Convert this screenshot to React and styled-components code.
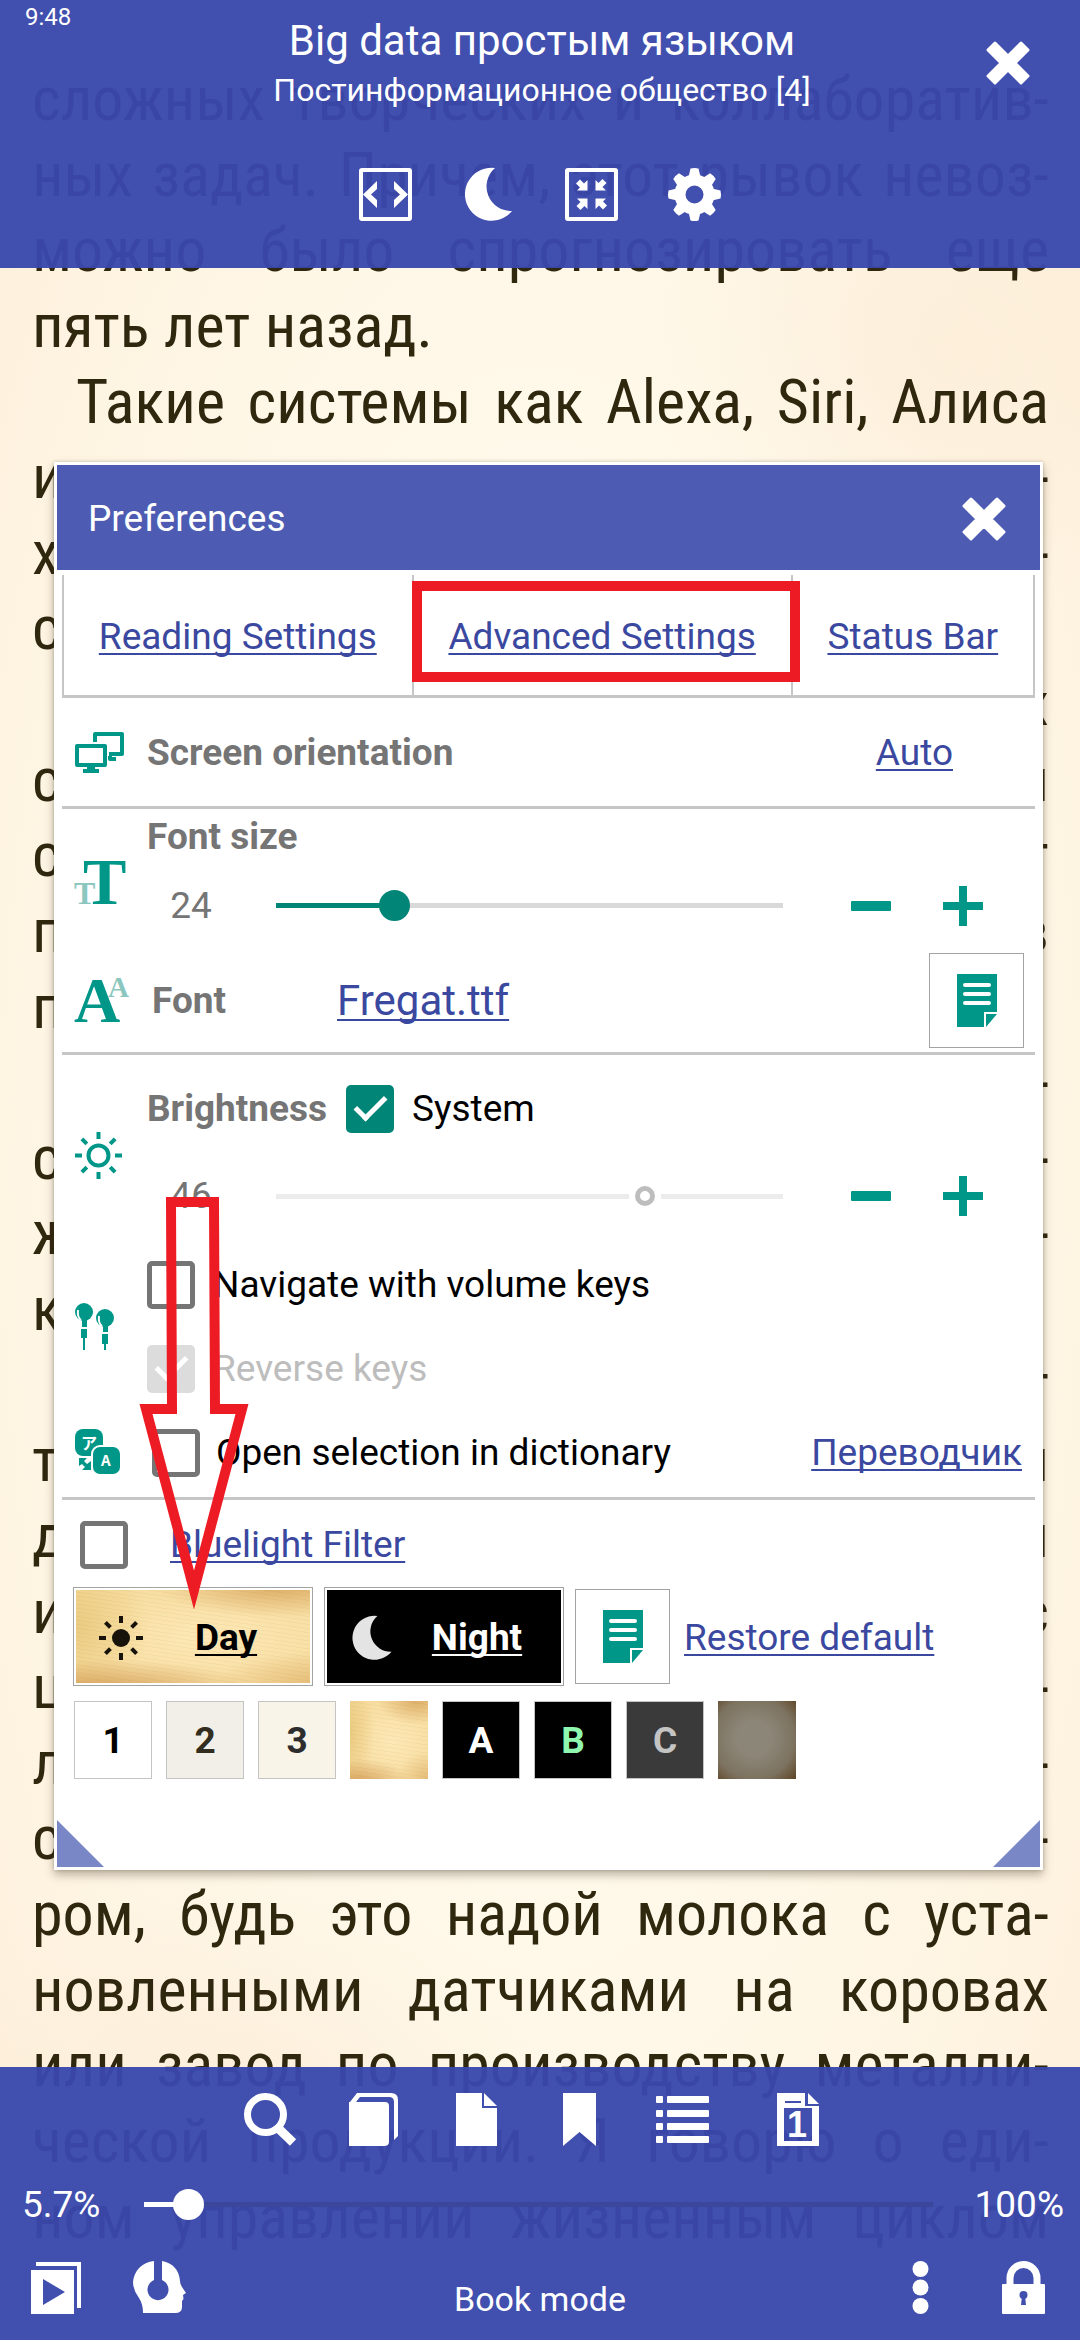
import React from 'react';
import styled, { createGlobalStyle, css } from 'styled-components';

const teal = '#009688';
const link = '#3a489f';
const grey = '#757575';
const rule = '#c6c6c6';
const red = '#ed1c24';
const ui = 'Roboto, "Liberation Sans", sans-serif';

const GlobalStyle = createGlobalStyle`
  *, *::before, *::after { box-sizing: border-box; }
  body { margin: 0; font-family: ${ui}; font-size: 37px; line-height: 44px; color: #000; }
  button { border: 0; padding: 0; background: none; font: inherit; color: inherit; cursor: pointer; }
  svg { display: block; flex: none; overflow: visible; }
`;

/* ---------- page ---------- */

const Reader = styled.main`
  position: relative;
  min-height: 100vh;
  overflow: hidden;
  background:
    radial-gradient(ellipse 300px 260px at 88% 15%, rgba(250, 230, 206, 0.4), transparent),
    radial-gradient(ellipse 320px 220px at 22% 90%, rgba(250, 228, 204, 0.4), transparent),
    radial-gradient(ellipse 70% 75% at 50% 50%, #fffaec 35%, #fef3e0 80%, #fdecd6 100%);
`;

const BookText = styled.article`
  padding: 61px 31px 0 32px;
  font-family: "Roboto Condensed", Roboto, "Liberation Sans", sans-serif;
  font-size: 62px;
  line-height: 1.22;
  color: #30270f;
`;

const Line = styled.p`
  margin: 0;
  min-height: 1.22em;
  white-space: nowrap;
  text-align: ${(p) => p.$align || 'justify'};
  text-align-last: ${(p) => p.$align || 'justify'};
  text-indent: ${(p) => (p.$indent ? '44px' : '0')};
`;

const lines = [
  { text: 'сложных творческих и коллаборатив-' },
  { text: 'ных задач. Причем, этот рывок невоз-' },
  { text: 'можно было спрогнозировать еще' },
  { text: 'пять лет назад.', align: 'left' },
  { text: 'Такие системы как Alexa, Siri, Алиса', indent: true },
  { text: 'и -' },
  { text: 'х -' },
  { text: 'с', align: 'left' },
  { text: 'х', align: 'right' },
  { text: 'с и' },
  { text: 'с т' },
  { text: 'п в' },
  { text: 'п', align: 'left' },
  { text: '-', align: 'right' },
  { text: 'с -' },
  { text: 'ж -' },
  { text: 'к', align: 'left' },
  { text: 'т', align: 'right' },
  { text: 'т и' },
  { text: 'д и' },
  { text: 'и с' },
  { text: 'ц -' },
  { text: 'л -' },
  { text: 'с -' },
  { text: 'ром, будь это надой молока с уста-' },
  { text: 'новленными датчиками на коровах' },
  { text: 'или завод по производству металли-' },
  { text: 'ческой продукции. Я говорю о еди-' },
  { text: 'ном управлении жизненным циклом' },
];

/* ---------- bars ---------- */

const bar = css`
  position: absolute;
  left: 0;
  right: 0;
  background: rgba(57, 72, 172, 0.96);
  color: #fff;
`;

const TopBar = styled.header`
  ${bar}
  top: 0;
  padding: 16px 0 47px;
`;

const Clock = styled.time`
  position: absolute;
  left: 25px;
  top: 5px;
  font-size: 24px;
  line-height: 24px;
`;

const TitleRow = styled.div`
  display: grid;
  grid-template-columns: 1fr auto 1fr;
  align-items: center;
  padding-right: 50px;
  padding-left: 54px;
`;

const Titles = styled.div`
  grid-column: 2;
  text-align: center;
`;

const Title = styled.h1`
  margin: 0 0 4px;
  font-size: 42px;
  line-height: 50px;
  font-weight: 400;
`;

const Subtitle = styled.p`
  margin: 0;
  font-size: 32px;
  line-height: 40px;
`;

const CloseButton = styled.button`
  justify-self: end;
`;

const IconBar = styled.nav`
  display: flex;
  justify-content: center;
  margin-top: ${(p) => p.$top || 0}px;
`;

const IconButton = styled.button`
  display: flex;
  align-items: center;
  justify-content: center;
  width: ${(p) => (p.$wide ? 128 : 103)}px;
  height: 53px;
`;

const BottomBar = styled.footer`
  ${bar}
  bottom: 0;
  padding: 26px 0;
`;

const Progress = styled.div`
  display: grid;
  grid-template-columns: 122px 1fr 131px;
  align-items: center;
  height: 115px;
  padding: 2px 16px 0 22px;
`;

const Percent = styled.span`
  text-align: ${(p) => (p.$end ? 'right' : 'left')};
`;

const ModeRow = styled.div`
  display: grid;
  grid-template-columns: 1fr auto 1fr;
  padding: 0 5px;
`;

const Group = styled.div`
  display: flex;
  justify-content: ${(p) => (p.$end ? 'flex-end' : 'flex-start')};
`;

const Mode = styled.span`
  align-self: end;
  font-size: 34px;
  line-height: 30px;
`;

/* ---------- dialog ---------- */

const Dialog = styled.section`
  position: absolute;
  left: 54px;
  right: 37px;
  top: 462px;
  padding: 3px;
  background: #fff;
  box-shadow: 0 5px 9px rgba(60, 50, 30, 0.35), 0 0 3px rgba(60, 50, 30, 0.25);
`;

const DialogHead = styled.header`
  display: flex;
  align-items: center;
  justify-content: space-between;
  height: 105px;
  padding: 2px 34px 0 31px;
  background: #4d5cb2;
  color: #fff;
`;

const DialogTitle = styled.h2`
  margin: 0;
  font-size: 37px;
  font-weight: 400;
`;

const Body = styled.div`
  padding: 5px 5px 0;
`;

const Tabs = styled.nav`
  display: flex;
  border: 2px solid ${rule};
  border-top: 0;
  border-bottom-width: 3px;
`;

const Tab = styled.div`
  position: relative;
  flex: 1 1 auto;
  display: flex;
  align-items: center;
  justify-content: center;
  height: 120px;
  padding-top: 3px;
  & + & { border-left: 2px solid ${rule}; }
`;

const Highlight = styled.span`
  position: absolute;
  z-index: 1;
  inset: 6px -9px 13px -2px;
  border: 10px solid ${red};
  pointer-events: none;
`;

const Link = styled.a`
  color: ${link};
  font-size: ${(p) => (p.$large ? 42 : 37)}px;
  text-decoration: underline;
  text-decoration-thickness: 2px;
  text-underline-offset: 4px;
  text-decoration-skip-ink: none;
`;

const Section = styled.section`
  border-bottom: 3px solid ${rule};
  padding: ${(p) => p.$pad || '0'};
`;

const Setting = styled.div`
  display: grid;
  grid-template-columns: 72px 1fr;
  align-items: center;
  padding-left: 13px;
`;

const Row = styled.div`
  display: flex;
  align-items: center;
  height: ${(p) => p.$h}px;
  padding-top: 2px;
  padding-right: ${(p) => p.$end || 0}px;
  padding-left: ${(p) => p.$start || 0}px;
`;

const Label = styled.label`
  color: ${grey};
  font-weight: 700;
  width: ${(p) => (p.$w ? `${p.$w}px` : 'auto')};
`;

const Push = styled.span`
  margin-left: auto;
`;

const Value = styled.output`
  width: 88px;
  margin-right: 41px;
  text-align: center;
  color: ${grey};
`;

const track = css`
  height: 5px;
  background: ${(p) =>
    p.$ghost
      ? p.$rest
      : `linear-gradient(to right, ${p.$fill} ${p.$at}%, ${p.$rest} ${p.$at}%)`};
`;

const Slider = styled.input`
  appearance: none;
  flex: 1;
  min-width: 0;
  width: 100%;
  height: 32px;
  margin: 0;
  background: none;
  &::-webkit-slider-runnable-track { ${track} }
  &::-webkit-slider-thumb {
    appearance: none;
    box-sizing: border-box;
    width: ${(p) => (p.$ghost ? 20 : 31)}px;
    height: ${(p) => (p.$ghost ? 20 : 31)}px;
    margin-top: ${(p) => (p.$ghost ? -8 : -13)}px;
    border-radius: 50%;
    background: ${(p) => (p.$ghost ? '#fff' : p.$fill)};
    border: ${(p) => (p.$ghost ? '5px solid #bdbdbd' : '0')};
    box-shadow: ${(p) => (p.$ghost ? '0 0 0 6px #fff' : 'none')};
  }
`;

const Step = styled.button`
  display: flex;
  align-items: center;
  justify-content: center;
  width: 92px;
  height: 60px;
  &:first-of-type { margin-left: 42px; }
  &:last-of-type { margin-right: 26px; }
`;

const BoxButton = styled.button`
  display: flex;
  align-items: center;
  justify-content: center;
  width: 95px;
  height: 95px;
  border: 1px solid #a3a3a3;
  background: #fff;
`;

const Check = styled.input`
  appearance: none;
  flex: none;
  position: relative;
  width: 48px;
  height: 48px;
  margin: 0;
  border: 5px solid ${grey};
  border-radius: 5px;
  background: #fff;
  &:checked { border: 0; background: #008577; }
  &:checked:disabled { background: #dcdcdc; }
  &:checked::after {
    content: "";
    position: absolute;
    left: 16px;
    top: 4px;
    width: 17px;
    height: 31px;
    border: solid #fff;
    border-width: 0 5px 5px 0;
    transform: rotate(45deg);
  }
`;

const CheckLabel = styled.label`
  padding-left: ${(p) => p.$gap}px;
  color: ${(p) => (p.$off ? '#bdbdbd' : '#000')};
`;

const Themes = styled.div`
  display: flex;
  align-items: center;
  gap: 11px;
  padding-left: 11px;
`;

const Restore = styled.div`
  padding: 2px 0 0 3px;
`;

const parchment = css`
  background:
    repeating-linear-gradient(8deg, rgba(160, 100, 20, 0.05) 0 1px, transparent 1px 4px),
    radial-gradient(ellipse 50% 30% at 85% 0%, rgba(196, 130, 50, 0.5), transparent),
    radial-gradient(ellipse 65% 30% at 12% 104%, rgba(190, 120, 45, 0.55), transparent),
    radial-gradient(ellipse 45% 35% at 104% 100%, rgba(205, 145, 65, 0.45), transparent),
    radial-gradient(ellipse 32% 70% at 0% 40%, rgba(222, 184, 95, 0.5), transparent),
    radial-gradient(ellipse 75% 70% at 55% 52%, #fde8b6, #f5da9b);
`;

const oldPaper = css`
  background: radial-gradient(ellipse 75% 75% at 46% 48%, #8c8678 30%, #7c725f 70%, #5e4424 100%);
`;

const ThemeButton = styled.button`
  display: flex;
  align-items: center;
  width: 240px;
  height: 99px;
  padding: 3px 0 0 25px;
  border: 1px solid #a3a3a3;
  box-shadow: inset 0 0 0 2px #fff;
  font-weight: 700;
  color: ${(p) => (p.$dark ? '#fff' : '#000')};
  background: #000;
  ${(p) => !p.$dark && parchment}
`;

const ThemeName = styled.span`
  flex: 1;
  padding-right: 3px;
  text-decoration: underline;
  text-decoration-thickness: 2px;
  text-underline-offset: 4px;
  text-decoration-skip-ink: none;
`;

const Swatches = styled.div`
  display: flex;
  gap: 14px;
  padding: 15px 0 0 12px;
`;

const Swatch = styled.button`
  width: 78px;
  height: 78px;
  padding-top: 2px;
  font-weight: 700;
  border: 1px solid #c4c4c4;
  color: ${(p) => p.$ink};
  background: ${(p) => p.$bg};
  ${(p) => p.$paper === 'light' && css`border: 0; ${parchment}`}
  ${(p) => p.$paper === 'dark' && css`border: 0; ${oldPaper}`}
`;

const Corners = styled.div`
  display: flex;
  justify-content: space-between;
  padding-top: 41px;
`;

const Corner = styled.span`
  width: 47px;
  height: 47px;
  background: #7a87c6;
  clip-path: ${(p) =>
    p.$right ? 'polygon(100% 0, 100% 100%, 0 100%)' : 'polygon(0 0, 100% 100%, 0 100%)'};
`;

const Pointer = styled.svg`
  position: absolute;
  left: 84px;
  top: 732px;
  pointer-events: none;
`;

/* ---------- icons ---------- */

const CloseIcon = () => (
  <svg width="44" height="44" viewBox="0 0 44 44" fill="#fff" stroke="#fff" strokeWidth="3" strokeLinejoin="round">
    <path d="M9 2 22 15 35 2 42 9 29 22 42 35 35 42 22 29 9 42 2 35 15 22 2 9Z" />
  </svg>
);

const WidthIcon = () => (
  <svg width="53" height="53" viewBox="0 0 53 53" fill="none" stroke="#fff">
    <rect x="2" y="2" width="49" height="49" rx="1" strokeWidth="4" />
    <path fill="#fff" stroke="none" d="M18 13V21L12 26.500 18 32V40L4 26.500ZM35 13V21L41 26.500 35 32V40L49 26.500Z" />
  </svg>
);

const MoonIcon = ({ size = 53, color = '#fff' }) => (
  <svg width={size} height={size} viewBox="0 0 53 53" fill={color}>
    <path d="M33 0A26.500 26.500 0 1 0 50 43A24.500 24.500 0 0 1 33 0Z" />
  </svg>
);

const CompressIcon = () => (
  <svg width="53" height="53" viewBox="0 0 53 53" fill="#fff">
    <rect x="2" y="2" width="49" height="49" rx="1" fill="none" stroke="#fff" strokeWidth="4" />
    {[0, 90, 180, 270].map((a) => (
      <g key={a} transform={`rotate(${a} 26.500 26.500)`}>
        <path d="M22.500 12V22.500H12L15 19.500 11 15.500 15 11.500 19 15.500Z" />
      </g>
    ))}
  </svg>
);

const GearIcon = () => (
  <svg width="53" height="53" viewBox="0 0 53 53" fill="#fff">
    <circle cx="26.500" cy="26.500" r="14.500" fill="none" stroke="#fff" strokeWidth="11" />
    {[0, 45, 90, 135, 180, 225, 270, 315].map((a) => (
      <path key={a} d="M20.500 9 22.500 0.500Q26.500-0.500 30.500 0.500L32.500 9Z" transform={`rotate(${a} 26.500 26.500)`} />
    ))}
  </svg>
);

const ScreensIcon = () => (
  <svg width="49" height="41" viewBox="0 0 49 41" fill="none" stroke={teal} strokeWidth="4" strokeLinejoin="round">
    <rect x="2" y="14" width="28" height="19" />
    <path d="M20 10V2H47V22H34" />
    <path d="M35 24V27H41" />
    <path d="M8 39H24" />
    <path d="M16 33V39" strokeWidth="8" />
  </svg>
);

const IconText = styled.text`
  font-family: "Liberation Serif", serif;
  font-weight: 700;
  font-size: ${(p) => p.$size}px;
  fill: ${(p) => (p.$pale ? '#8cc7bf' : teal)};
`;

const SizeIcon = () => (
  <svg width="52" height="46" viewBox="0 0 52 46" aria-hidden="true">
    <IconText x="-1" y="43" $size={32} $pale>T</IconText>
    <IconText x="8" y="43" $size={65}>T</IconText>
  </svg>
);

const FontIcon = () => (
  <svg width="54" height="46" viewBox="0 0 54 46" aria-hidden="true">
    <IconText x="-1" y="45" $size={64}>A</IconText>
    <IconText x="33" y="20" $size={29} $pale>A</IconText>
  </svg>
);

const SunIcon = () => (
  <svg width="47" height="47" viewBox="0 0 47 47" fill="none" stroke={teal} strokeWidth="4">
    <circle cx="23.500" cy="23.500" r="10" />
    {[0, 45, 90, 135, 180, 225, 270, 315].map((a) => (
      <path key={a} d="M23.500 0V7" transform={`rotate(${a} 23.500 23.500)`} />
    ))}
  </svg>
);

const DayIcon = () => (
  <svg width="44" height="44" viewBox="0 0 44 44" fill="#17130a" stroke="#17130a" strokeWidth="4">
    <circle cx="22" cy="22" r="9" strokeWidth="0" />
    {[0, 45, 90, 135, 180, 225, 270, 315].map((a) => (
      <path key={a} d="M22 0V7" transform={`rotate(${a} 22 22)`} />
    ))}
  </svg>
);

const EarbudsIcon = () => (
  <svg width="39" height="47" viewBox="0 0 39 47" fill={teal}>
    <circle cx="9" cy="9" r="9" />
    <path d="M7 17H12V24H7ZM6 26H12V35H6ZM8 35H10V47H8Z" />
    <circle cx="30" cy="15" r="9" />
    <path d="M28 23H33V29H28ZM27 31H33V41H27ZM29 41H31V47H29Z" />
    <path d="M3 7Q2 14 6 17M24 13Q23 20 27 23" fill="none" stroke="#fff" strokeWidth="2" />
  </svg>
);

const GlyphText = styled.text`
  font-family: "Noto Sans CJK JP", sans-serif;
  font-size: ${(p) => p.$size}px;
  font-weight: 700;
  fill: #fff;
`;

const TranslateIcon = () => (
  <svg width="46" height="46" viewBox="0 0 46 46" fill={teal} aria-hidden="true">
    <rect width="28" height="27" rx="8" />
    <GlyphText x="6" y="20" $size={16}>ア</GlyphText>
    <path d="M4 29H12L9 32 12 35 16 32V41H7L10 38 7 35 4 37Z" />
    <rect x="17" y="17" width="29" height="29" rx="8" stroke="#fff" strokeWidth="2" />
    <GlyphText x="26" y="37" $size={15}>A</GlyphText>
  </svg>
);

const MinusIcon = () => (
  <svg width="40" height="40" viewBox="0 0 40 40" fill={teal}>
    <rect y="15" width="40" height="10" rx="1" />
  </svg>
);

const PlusIcon = () => (
  <svg width="40" height="40" viewBox="0 0 40 40" fill={teal}>
    <path d="M16 0H24V16H40V24H24V40H16V24H0V16H16Z" />
  </svg>
);

const DocIcon = () => (
  <svg width="42" height="53" viewBox="0 0 42 53">
    <path fill={teal} d="M1 0H41V38H28V53H1Z" />
    <path fill={teal} d="M30 40H41L30 53Z" />
    <path d="M9 11H33M9 20H33M9 29H33" stroke="#fff" strokeWidth="4" strokeLinecap="round" />
  </svg>
);

const SearchIcon = () => (
  <svg width="53" height="53" viewBox="0 0 53 53" fill="none" stroke="#fff">
    <circle cx="21.500" cy="21.500" r="18" strokeWidth="7" />
    <path d="M34 35 49 49.500" strokeWidth="9" />
  </svg>
);

const PagesIcon = () => (
  <svg width="49" height="53" viewBox="0 0 49 53">
    <path fill="#fff" d="M0 9H36Q40 9 40 13V49Q40 53 35 53H0Z" />
    <path fill="#fff" d="M1 9 8 0H42Q49 0 49 7V43L45 47V9Q45 4 40 4H11L7 9Z" />
  </svg>
);

const FileIcon = () => (
  <svg width="41" height="53" viewBox="0 0 41 53" fill="#fff">
    <path d="M0 0H26V15H41V53H0Z" />
    <path d="M28 0 41 13H28Z" />
  </svg>
);

const BookmarkIcon = () => (
  <svg width="33" height="53" viewBox="0 0 33 53" fill="#fff">
    <path d="M0 0H33V53L16.500 39 0 53Z" />
  </svg>
);

const ListIcon = () => (
  <svg width="53" height="53" viewBox="0 0 53 53" fill="#fff">
    {[3, 17, 30, 43].map((y) => (
      <g key={y}>
        <rect y={y} width="7" height="7" rx="1" />
        <rect x="11" y={y} width="42" height="7" rx="1" />
      </g>
    ))}
  </svg>
);

const PageNumberText = styled.text`
  font-family: "Liberation Sans", sans-serif;
  font-size: 36px;
  font-weight: 700;
  fill: #fff;
`;

const PageOneIcon = () => (
  <svg width="42" height="53" viewBox="0 0 42 53" aria-hidden="true">
    <path fill="#fff" fillRule="evenodd" d="M0 0H28V13H42V53H0ZM7 15V48H35V15ZM8 8V10H24V8Z" />
    <path fill="#fff" d="M31 0 42 11H31Z" />
    <PageNumberText x="10" y="44">1</PageNumberText>
  </svg>
);

const PlayIcon = () => (
  <svg width="51" height="53" viewBox="0 0 51 53">
    <path fill="#fff" fillRule="evenodd" d="M0 9H43V53H0ZM12 18V44L34 31Z" />
    <path d="M5 3H48V47" fill="none" stroke="#fff" strokeWidth="4" />
  </svg>
);

const HeadIcon = () => (
  <svg width="53" height="53" viewBox="0 0 53 53" fill="#fff">
    <path d="M21 0V19A10.500 10.500 0 1 0 29 19V0C40 2 46 9 47 20Q47 23 49 26L53 32 50 34 50.500 38 49 40 49 46Q49 52 42 52H10Q10 43 6 37Q0 29 0 21C1 10 9 1 21 0Z" />
  </svg>
);

const DotsIcon = () => (
  <svg width="17" height="53" viewBox="0 0 17 53" fill="#fff">
    <circle cx="8.500" cy="8" r="8" />
    <circle cx="8.500" cy="26.500" r="8" />
    <circle cx="8.500" cy="45" r="8" />
  </svg>
);

const LockIcon = () => (
  <svg width="43" height="53" viewBox="0 0 43 53">
    <path d="M8 24V17A13.500 13.500 0 0 1 35 17V24" fill="none" stroke="#fff" strokeWidth="7" />
    <rect y="23" width="43" height="30" rx="1" fill="#fff" />
    <circle cx="21.500" cy="34" r="4" fill="#414fae" />
    <path d="M20 35H23L24 44H19Z" fill="#414fae" />
  </svg>
);

/* ---------- app ---------- */

const Steps = ({ name }) => (
  <>
    <Step aria-label={`Decrease ${name}`}><MinusIcon /></Step>
    <Step aria-label={`Increase ${name}`}><PlusIcon /></Step>
  </>
);

const swatches = [
  { name: '1', bg: '#fff', ink: '#000' },
  { name: '2', bg: '#f2efe8', ink: '#332d20' },
  { name: '3', bg: '#f9f4e8', ink: '#2d2d2d' },
  { paper: 'light' },
  { name: 'A', bg: '#000', ink: '#fff' },
  { name: 'B', bg: '#000', ink: '#8ff7b0' },
  { name: 'C', bg: '#3a3a3a', ink: '#c4c4c4' },
  { paper: 'dark' },
];

function Preferences() {
  return (
    <Dialog role="dialog" aria-labelledby="prefs-title">
      <DialogHead>
        <DialogTitle id="prefs-title">Preferences</DialogTitle>
        <CloseButton aria-label="Close preferences"><CloseIcon /></CloseButton>
      </DialogHead>
      <Body>
        <Tabs>
          <Tab><Link href="#reading">Reading Settings</Link></Tab>
          <Tab><Link href="#advanced">Advanced Settings</Link><Highlight /></Tab>
          <Tab><Link href="#status">Status Bar</Link></Tab>
        </Tabs>

        <Section>
          <Setting>
            <ScreensIcon />
            <Row $h={108} $end={82}>
              <Label as="span">Screen orientation</Label>
              <Push><Link href="#orientation">Auto</Link></Push>
            </Row>
          </Setting>
        </Section>

        <Section $pad="6px 0 5px">
          <Setting>
            <SizeIcon />
            <div>
              <Row $h={42}><Label htmlFor="font-size">Font size</Label></Row>
              <Row $h={95}>
                <Value htmlFor="font-size">24</Value>
                <Slider id="font-size" type="range" min="10" max="75" defaultValue="24" $fill="#008577" $rest="#d9d9d9" $at={24} />
                <Steps name="font size" />
              </Row>
            </div>
          </Setting>
          <Setting>
            <FontIcon />
            <Row $h={95} $start={5} $end={11}>
              <Label as="span" $w={185}>Font</Label>
              <Link href="#font" $large>Fregat.ttf</Link>
              <Push><BoxButton aria-label="Font styles"><DocIcon /></BoxButton></Push>
            </Row>
          </Setting>
        </Section>

        <Section $pad="13px 0 3px">
          <Setting>
            <SunIcon />
            <div>
              <Row $h={80}>
                <Label htmlFor="brightness" $w={199}>Brightness</Label>
                <Check id="system" type="checkbox" defaultChecked />
                <CheckLabel htmlFor="system" $gap={18}>System</CheckLabel>
              </Row>
              <Row $h={94}>
                <Value htmlFor="brightness">46</Value>
                <Slider id="brightness" type="range" min="-100" max="98" defaultValue="46" disabled $ghost $fill="#bdbdbd" $rest="#ececec" />
                <Steps name="brightness" />
              </Row>
            </div>
          </Setting>
          <Setting>
            <EarbudsIcon />
            <div>
              <Row $h={84}>
                <Check id="volume" type="checkbox" />
                <CheckLabel htmlFor="volume" $gap={18}>Navigate with volume keys</CheckLabel>
              </Row>
              <Row $h={84}>
                <Check id="reverse" type="checkbox" defaultChecked disabled />
                <CheckLabel htmlFor="reverse" $gap={18} $off>Reverse keys</CheckLabel>
              </Row>
            </div>
          </Setting>
          <Setting>
            <TranslateIcon />
            <Row $h={84} $start={5} $end={13}>
              <Check id="dictionary" type="checkbox" />
              <CheckLabel htmlFor="dictionary" $gap={16}>Open selection in dictionary</CheckLabel>
              <Push><Link href="#translator">Переводчик</Link></Push>
            </Row>
          </Setting>
        </Section>

        <Row $h={87} $start={18}>
          <Check id="bluelight" type="checkbox" aria-label="Bluelight Filter" />
          <CheckLabel as="span" $gap={42}><Link href="#bluelight">Bluelight Filter</Link></CheckLabel>
        </Row>

        <Themes>
          <ThemeButton><DayIcon /><ThemeName>Day</ThemeName></ThemeButton>
          <ThemeButton $dark><MoonIcon size={44} color="#e4e4e4" /><ThemeName>Night</ThemeName></ThemeButton>
          <BoxButton aria-label="Theme styles"><DocIcon /></BoxButton>
          <Restore><Link href="#restore">Restore default</Link></Restore>
        </Themes>
        <Swatches>
          {swatches.map((s, i) => (
            <Swatch key={i} $bg={s.bg} $ink={s.ink} $paper={s.paper} aria-label={s.name ? undefined : `${s.paper} paper`}>
              {s.name}
            </Swatch>
          ))}
        </Swatches>
      </Body>
      <Corners><Corner /><Corner $right /></Corners>

      <Pointer width="112" height="420" viewBox="0 0 112 420" fill="none" stroke={red} strokeWidth="10" strokeMiterlimit="10">
        <path d="M33 8H76L77 215H104L56 396 8 215H34Z" />
      </Pointer>
    </Dialog>
  );
}

export default function App() {
  return (
    <>
      <GlobalStyle />
      <Reader>
        <BookText>
          {lines.map((l, i) => (
            <Line key={i} $align={l.align} $indent={l.indent}>{l.text}</Line>
          ))}
        </BookText>

        <TopBar>
          <Clock>9:48</Clock>
          <TitleRow>
            <Titles>
              <Title>Big data простым языком</Title>
              <Subtitle>Постинформационное общество [4]</Subtitle>
            </Titles>
            <CloseButton aria-label="Close book"><CloseIcon /></CloseButton>
          </TitleRow>
          <IconBar $top={58}>
            <IconButton aria-label="Page width"><WidthIcon /></IconButton>
            <IconButton aria-label="Night mode"><MoonIcon /></IconButton>
            <IconButton aria-label="Full screen"><CompressIcon /></IconButton>
            <IconButton aria-label="Settings"><GearIcon /></IconButton>
          </IconBar>
        </TopBar>

        <Preferences />

        <BottomBar>
          <IconBar>
            <IconButton aria-label="Search"><SearchIcon /></IconButton>
            <IconButton aria-label="Library"><PagesIcon /></IconButton>
            <IconButton aria-label="Document"><FileIcon /></IconButton>
            <IconButton aria-label="Bookmarks"><BookmarkIcon /></IconButton>
            <IconButton aria-label="Contents"><ListIcon /></IconButton>
            <IconButton aria-label="Single page" $wide><PageOneIcon /></IconButton>
          </IconBar>
          <Progress>
            <Percent>5.7%</Percent>
            <Slider aria-label="Reading position" type="range" min="2" max="100" step="0.1" defaultValue="5.7" $fill="#fff" $rest="#3b479b" $at={5} />
            <Percent $end>100%</Percent>
          </Progress>
          <ModeRow>
            <Group>
              <IconButton aria-label="Auto scroll"><PlayIcon /></IconButton>
              <IconButton aria-label="Read aloud"><HeadIcon /></IconButton>
            </Group>
            <Mode>Book mode</Mode>
            <Group $end>
              <IconButton aria-label="More"><DotsIcon /></IconButton>
              <IconButton aria-label="Lock"><LockIcon /></IconButton>
            </Group>
          </ModeRow>
        </BottomBar>
      </Reader>
    </>
  );
}
